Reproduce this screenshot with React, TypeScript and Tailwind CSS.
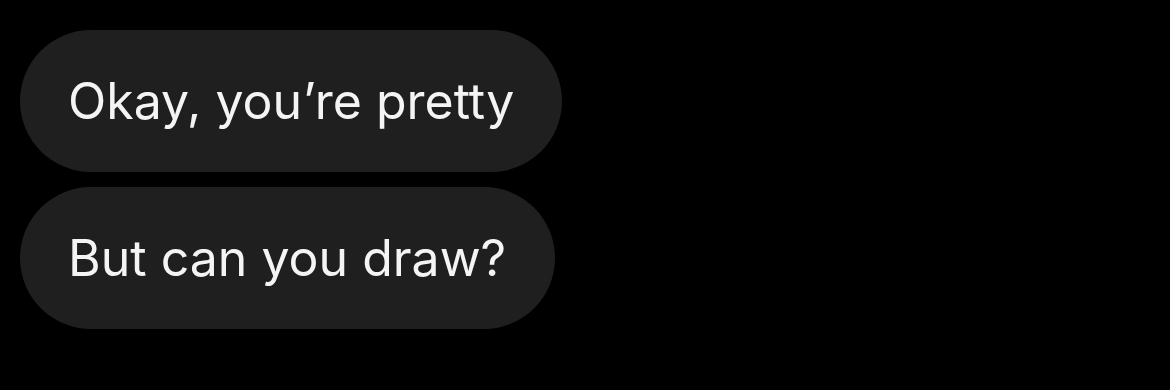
export default function App() {
	const messages = [
		{ text: "Okay, you’re pretty", width: "w-[542px]" },
		{ text: "But can you draw?", width: "w-[535px]" },
	];

	return <div className="h-[390px] w-[1170px] bg-black pl-5 pt-[30px] font-['Inter','Liberation_Sans',sans-serif]">
		<div className="flex flex-col items-start gap-[15px]">
			{messages.map((m) => (
				<div
					key={m.text}
					className={`flex h-[142px] items-center rounded-full bg-[#1f1f1f] pl-12 ${m.width}`}
				>
					<span className="whitespace-nowrap text-[50px] leading-none text-[#f4f4f4]">{m.text}</span>
				</div>
			))}
		</div>
	</div>
};
